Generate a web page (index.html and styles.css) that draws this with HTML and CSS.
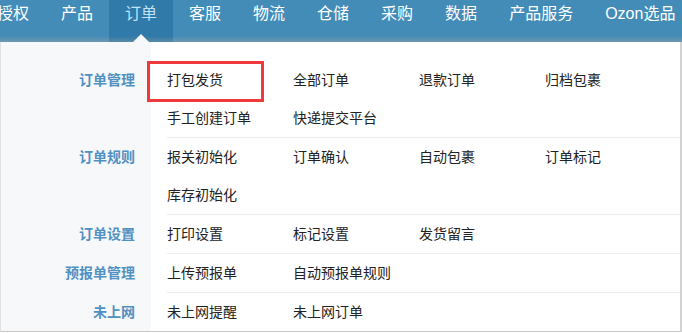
FILE: index.html
```html
<!DOCTYPE html>
<html lang="zh-CN">
<head>
    <meta charset="UTF-8">
    <meta name="viewport" content="width=device-width, initial-scale=1.0">
    <title>订单</title>
    <link rel="stylesheet" href="styles.css">
</head>
<body>
    <div class="topnav">
        <a class="nav-item">授权</a>
        <a class="nav-item">产品</a>
        <a class="nav-item active">订单</a>
        <a class="nav-item">客服</a>
        <a class="nav-item">物流</a>
        <a class="nav-item">仓储</a>
        <a class="nav-item">采购</a>
        <a class="nav-item">数据</a>
        <a class="nav-item">产品服务</a>
        <a class="nav-item">Ozon选品</a>
    </div>

    <div class="menu-panel">
        <div class="menu-group">
            <div class="group-label">订单管理</div>
            <div class="group-items">
                <a class="menu-link marked">打包发货</a>
                <a class="menu-link">全部订单</a>
                <a class="menu-link">退款订单</a>
                <a class="menu-link">归档包裹</a>
                <a class="menu-link">手工创建订单</a>
                <a class="menu-link">快递提交平台</a>
            </div>
        </div>
        <div class="menu-group">
            <div class="group-label">订单规则</div>
            <div class="group-items">
                <a class="menu-link">报关初始化</a>
                <a class="menu-link">订单确认</a>
                <a class="menu-link">自动包裹</a>
                <a class="menu-link">订单标记</a>
                <a class="menu-link">库存初始化</a>
            </div>
        </div>
        <div class="menu-group">
            <div class="group-label">订单设置</div>
            <div class="group-items">
                <a class="menu-link">打印设置</a>
                <a class="menu-link">标记设置</a>
                <a class="menu-link">发货留言</a>
            </div>
        </div>
        <div class="menu-group">
            <div class="group-label">预报单管理</div>
            <div class="group-items">
                <a class="menu-link">上传预报单</a>
                <a class="menu-link">自动预报单规则</a>
            </div>
        </div>
        <div class="menu-group">
            <div class="group-label">未上网</div>
            <div class="group-items">
                <a class="menu-link">未上网提醒</a>
                <a class="menu-link">未上网订单</a>
            </div>
        </div>
    </div>
</body>
</html>
```

FILE: styles.css
```css
body {
    margin: 0;
    padding: 0;
    width: 682px;
    height: 333px;
    overflow: hidden;
    background-color: #fff;
    font-family: "Liberation Sans", "Noto Sans CJK SC", sans-serif;
}

/* top bar */
.topnav {
    display: flex;
    height: 42px;
    margin-left: -19px;
    white-space: nowrap;
    background: linear-gradient(#438cb7 0, #438cb7 36px, #6e98b0 42px);
}

.nav-item {
    position: relative;
    padding: 0 16px;
    font-size: 16px;
    line-height: 28px;
    color: #fff;
}

.nav-item.active {
    color: #bfe3f7;
    background: linear-gradient(#2f7aa9 0, #2f7aa9 36px, #5a8aa6 42px);
}

.nav-item.active:after {
    content: "";
    position: absolute;
    left: 24px;
    bottom: 0;
    border-left: 8px solid transparent;
    border-right: 8px solid transparent;
    border-bottom: 8px solid #f6f8fa;
}

/* dropdown */
.menu-panel {
    height: 270px;
    padding-top: 19px;
    border-right: 2px solid #d2d2d2;
    border-bottom: 1px solid #c8c8c8;
    border-left: 1px solid #e2e2e2;
    background: linear-gradient(to right, #f6f8fa 150px, #fff 150px);
}

.menu-group {
    display: flex;
}

.group-label {
    width: 134px;
    padding-right: 16px;
    text-align: right;
    font-size: 14px;
    font-weight: bold;
    line-height: 38px;
    color: #5190c2;
}

.group-items {
    display: grid;
    grid-template-columns: repeat(4, 126px);
    flex: 1;
    margin-left: 16px;
    border-bottom: 1px solid #ececec;
}

.menu-group:last-child .group-items {
    border-bottom: none;
}

.menu-link {
    position: relative;
    font-size: 14px;
    line-height: 38px;
    color: #222;
}

.marked:after {
    content: "";
    position: absolute;
    left: -20px;
    top: 0;
    width: 111px;
    height: 35px;
    border: 3px solid #ee3a3c;
}
```
